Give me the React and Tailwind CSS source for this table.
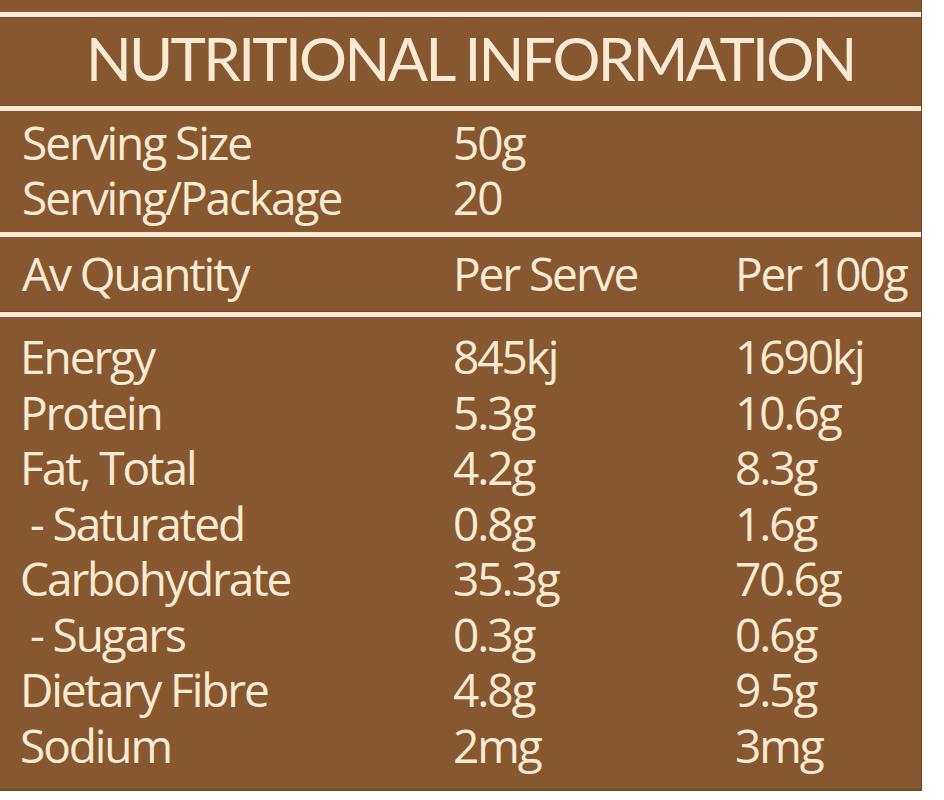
import React from 'react';

const serving = [
  ['Serving Size', '50g'],
  ['Serving/Package', '20'],
];

const nutrients = [
  ['Energy', '845kj', '1690kj'],
  ['Protein', '5.3g', '10.6g'],
  ['Fat, Total', '4.2g', '8.3g'],
  ['\u00a0- Saturated', '0.8g', '1.6g'],
  ['Carbohydrate', '35.3g', '70.6g'],
  ['\u00a0- Sugars', '0.3g', '0.6g'],
  ['Dietary Fibre', '4.8g', '9.5g'],
  ['Sodium', '2mg', '3mg'],
];

const Rule = () => <div className="h-[5px] bg-[#fbead3]" />;

const App = () => {
  return (
    <div className="w-[944px] h-[800px] bg-white overflow-hidden" style={{ fontFamily: '"Open Sans", "Liberation Sans", sans-serif' }}>
      <div className="w-[922px] h-[791px] bg-[#87582f] text-[#fbead3] flex flex-col border-r border-b-2 border-[#6e4524]">
        <div className="h-[12px]" />
        <Rule />
        <div className="h-[89px] flex items-center pl-[86px] pb-[8px] border-y border-[#744a28]">
          <h1 className="text-[60px] font-normal tracking-[-0.045em] leading-none" style={{ fontFamily: 'Lato, "Open Sans", sans-serif' }}>
            NUTRITIONAL INFORMATION
          </h1>
        </div>
        <Rule />
        <div className="h-[121px] pt-[4px] pl-[22px] text-[46px] font-medium tracking-[-0.045em] leading-[55px]">
          {serving.map(([label, value]) => (
            <div key={label} className="grid grid-cols-[431px_1fr]">
              <span>{label}</span>
              <span>{value}</span>
            </div>
          ))}
        </div>
        <Rule />
        <div className="h-[75px] pl-[22px] pb-[2px] flex items-center text-[46px] font-medium tracking-[-0.045em] border-b border-[#744a28]">
          <div className="grid grid-cols-[431px_282px_1fr] w-full leading-none">
            <span>Av Quantity</span>
            <span>Per Serve</span>
            <span>Per 100g</span>
          </div>
        </div>
        <Rule />
        <div className="flex-1 pt-[12px] pl-[20px] text-[46px] font-medium tracking-[-0.045em] leading-[55.5px]">
          {nutrients.map(([label, serve, per100]) => (
            <div key={label} className="grid grid-cols-[433px_282px_1fr]">
              <span className="whitespace-pre">{label}</span>
              <span>{serve}</span>
              <span>{per100}</span>
            </div>
          ))}
        </div>
      </div>
    </div>
  );
};

export default App;
